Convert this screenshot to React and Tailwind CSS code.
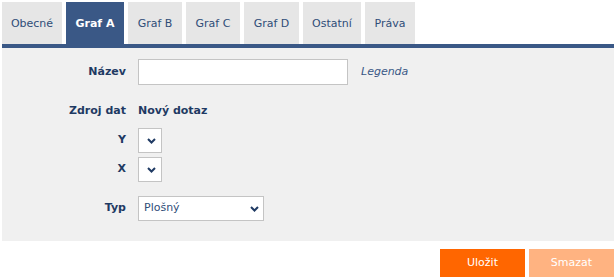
import React from "react";

const font = { fontFamily: '"DejaVu Sans", "Open Sans", sans-serif' };

function Chevron() {
  return (
    <svg width="9" height="6" viewBox="0 0 9 6" className="block">
      <path d="M1 1 L4.5 4.5 L8 1" fill="none" stroke="#1f3a63" strokeWidth="2" />
    </svg>
  );
}

const tabs = [
  { label: "Obecné", w: "w-[60px]" },
  { label: "Graf A", w: "w-[58px]", active: true },
  { label: "Graf B", w: "w-[54px]" },
  { label: "Graf C", w: "w-[54px]" },
  { label: "Graf D", w: "w-[55px]" },
  { label: "Ostatní", w: "w-[58px]" },
  { label: "Práva", w: "w-[50px]" },
];

export default function App() {
  return (
    <div className="w-[616px] h-[280px] bg-white pl-[2px] pt-[2px] text-[11px]" style={font}>
      <div className="w-[612px]">
        <div className="flex gap-[4px] h-[42px]">
          {tabs.map((t) => (
            <div
              key={t.label}
              className={`${t.w} h-full flex items-center justify-center pt-[2px] ${
                t.active ? "bg-[#3a5886] text-white font-bold" : "bg-[#e6e6e6] text-[#2f4d78]"
              }`}
            >
              {t.label}
            </div>
          ))}
        </div>
        <div className="h-[4px] bg-[#3a5886]" />
        <div className="bg-[#f0f0f0] h-[193px] pt-[11px] text-[#1f3a63]">
          <div className="flex items-center h-[26px]">
            <div className="w-[124px] text-right font-bold">Název</div>
            <div className="ml-[12px] w-[210px] h-[26px] bg-white border border-[#c4c4c4]" />
            <div className="ml-[13px] italic text-[#3a5886]">Legenda</div>
          </div>
          <div className="flex items-center h-[18px] mt-[17px]">
            <div className="w-[124px] text-right font-bold">Zdroj dat</div>
            <div className="ml-[12px] font-bold">Nový dotaz</div>
          </div>
          <div className="flex items-center h-[25px] mt-[8px]">
            <div className="w-[124px] text-right font-bold">Y</div>
            <div className="ml-[12px] w-[24px] h-[25px] bg-white border border-[#c4c4c4] flex items-center justify-end pr-[5px]">
              <Chevron />
            </div>
          </div>
          <div className="flex items-center h-[25px] mt-[4px]">
            <div className="w-[124px] text-right font-bold">X</div>
            <div className="ml-[12px] w-[24px] h-[25px] bg-white border border-[#c4c4c4] flex items-center justify-end pr-[5px]">
              <Chevron />
            </div>
          </div>
          <div className="flex items-center h-[25px] mt-[14px]">
            <div className="w-[124px] text-right font-bold">Typ</div>
            <div className="ml-[12px] w-[126px] h-[25px] bg-white border border-[#c4c4c4] flex items-center justify-between pl-[5px] pr-[4px]">
              <span className="text-[#2f4d78]">Plošný</span>
              <Chevron />
            </div>
          </div>
        </div>
        <div className="flex justify-end gap-[4px] mt-[8px]">
          <div className="w-[85px] h-[28px] bg-[#ff6600] text-white flex items-center justify-center">Uložit</div>
          <div className="w-[85px] h-[28px] bg-[#ffb381] text-white flex items-center justify-center">Smazat</div>
        </div>
      </div>
    </div>
  );
}
